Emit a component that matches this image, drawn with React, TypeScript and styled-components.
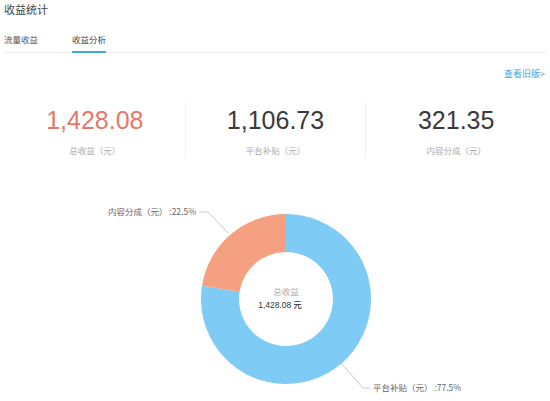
import React from "react";
import styled, { createGlobalStyle } from "styled-components";

const Global = createGlobalStyle`
  html, body { margin: 0; padding: 0; background: #fff; }
  body { font-family: "Noto Sans CJK SC", "Noto Sans", sans-serif; }
`;

const Page = styled.div`
  width: 550px;
  height: 401px;
  overflow: hidden;
  background: #fff;
`;

const Title = styled.div`
  padding-left: 4px;
  font-size: 11px;
  line-height: 18px;
  height: 18px;
  color: #444;
`;

const TabBar = styled.div`
  display: flex;
  margin: 0 3px;
  padding-left: 1px;
  border-bottom: 1px solid #eeeeee;
`;

const Tab = styled.div<{ $active?: boolean }>`
  font-size: 8.5px;
  line-height: 14px;
  padding-top: 14px;
  padding-bottom: 5px;
  margin-right: 34px;
  color: ${(p) => (p.$active ? "#444" : "#555")};
  border-bottom: 2px solid ${(p) => (p.$active ? "#45a9d8" : "transparent")};
  margin-bottom: -1px;
`;

const LinkRow = styled.div`
  display: flex;
  justify-content: flex-end;
  padding-right: 5px;
  margin-top: 15px;
`;

const OldLink = styled.a`
  font-size: 9px;
  line-height: 12px;
  color: #4aa6d0;
  text-decoration: none;
`;

const Stats = styled.div`
  display: grid;
  grid-template-columns: repeat(3, 1fr);
  padding: 0 4px;
  margin-top: 22px;
`;

const Stat = styled.div<{ $divider?: boolean }>`
  display: flex;
  flex-direction: column;
  align-items: center;
  padding: 3px 0;
  border-left: 1px solid ${(p) => (p.$divider ? "#f2f2f2" : "transparent")};
`;

const Value = styled.div<{ $color: string }>`
  font-family: "Liberation Sans", Arial, sans-serif;
  font-size: 25px;
  line-height: 30px;
  color: ${(p) => p.$color};
`;

const Label = styled.div`
  margin-top: 9px;
  font-size: 8.5px;
  line-height: 12px;
  color: #aaa;
`;

const Chart = styled.svg`
  display: block;
  margin-top: 30px;
`;

const cx = 286;
const cy = 300;
const R = 85;
const r = 47;

function pt(rad: number, deg: number) {
  // deg measured clockwise from top
  const a = (deg * Math.PI) / 180;
  return [cx + rad * Math.sin(a), cy - rad * Math.cos(a)];
}

function segment(start: number, end: number) {
  const [x1, y1] = pt(R, start);
  const [x2, y2] = pt(R, end);
  const [x3, y3] = pt(r, end);
  const [x4, y4] = pt(r, start);
  const large = end - start > 180 ? 1 : 0;
  return `M${x1},${y1} A${R},${R} 0 ${large} 1 ${x2},${y2} L${x3},${y3} A${r},${r} 0 ${large} 0 ${x4},${y4} Z`;
}

const stats = [
  { value: "1,428.08", label: "总收益（元）", color: "#e6786b" },
  { value: "1,106.73", label: "平台补贴（元）", color: "#3a3a3a" },
  { value: "321.35", label: "内容分成（元）", color: "#3a3a3a" },
];

export default function App() {
  return (
    <Page>
      <Global />
      <Title>收益统计</Title>
      <TabBar>
        <Tab>流量收益</Tab>
        <Tab $active>收益分析</Tab>
      </TabBar>
      <LinkRow>
        <OldLink href="#">查看旧版&gt;</OldLink>
      </LinkRow>
      <Stats>
        {stats.map((s, i) => (
          <Stat key={s.label} $divider={i > 0}>
            <Value $color={s.color}>{s.value}</Value>
            <Label>{s.label}</Label>
          </Stat>
        ))}
      </Stats>
      <Chart width="550" height="211" viewBox="0 190 550 211">
        <path d={segment(0, 279)} fill="#7ecbf5" />
        <path d={segment(279, 360)} fill="#f5a181" />
        <polyline
          points="229,235 208,213 199,213"
          fill="none"
          stroke="#bbbbbb"
          strokeWidth="0.8"
        />
        <polyline
          points="341,364 363,389 370,389"
          fill="none"
          stroke="#bbbbbb"
          strokeWidth="0.8"
        />
        <text
          x="196"
          y="216"
          textAnchor="end"
          fontSize="8.5"
          fill="#666"
          fontFamily='"Noto Sans CJK SC", sans-serif'
        >
          内容分成（元） :22.5%
        </text>
        <text
          x="373"
          y="392"
          fontSize="8.5"
          fill="#666"
          fontFamily='"Noto Sans CJK SC", sans-serif'
        >
          平台补贴（元） :77.5%
        </text>
        <text
          x={cx}
          y="296"
          textAnchor="middle"
          fontSize="8.5"
          fill="#aaa"
          fontFamily='"Noto Sans CJK SC", sans-serif'
        >
          总收益
        </text>
        <text
          x={cx - 6}
          y="309"
          textAnchor="middle"
          fontSize="8.5"
          fontWeight="500"
          fill="#333"
          fontFamily='"Noto Sans CJK SC", sans-serif'
        >
          <tspan fontFamily='"Liberation Sans", Arial, sans-serif'>1,428.08</tspan> 元
        </text>
      </Chart>
    </Page>
  );
}
